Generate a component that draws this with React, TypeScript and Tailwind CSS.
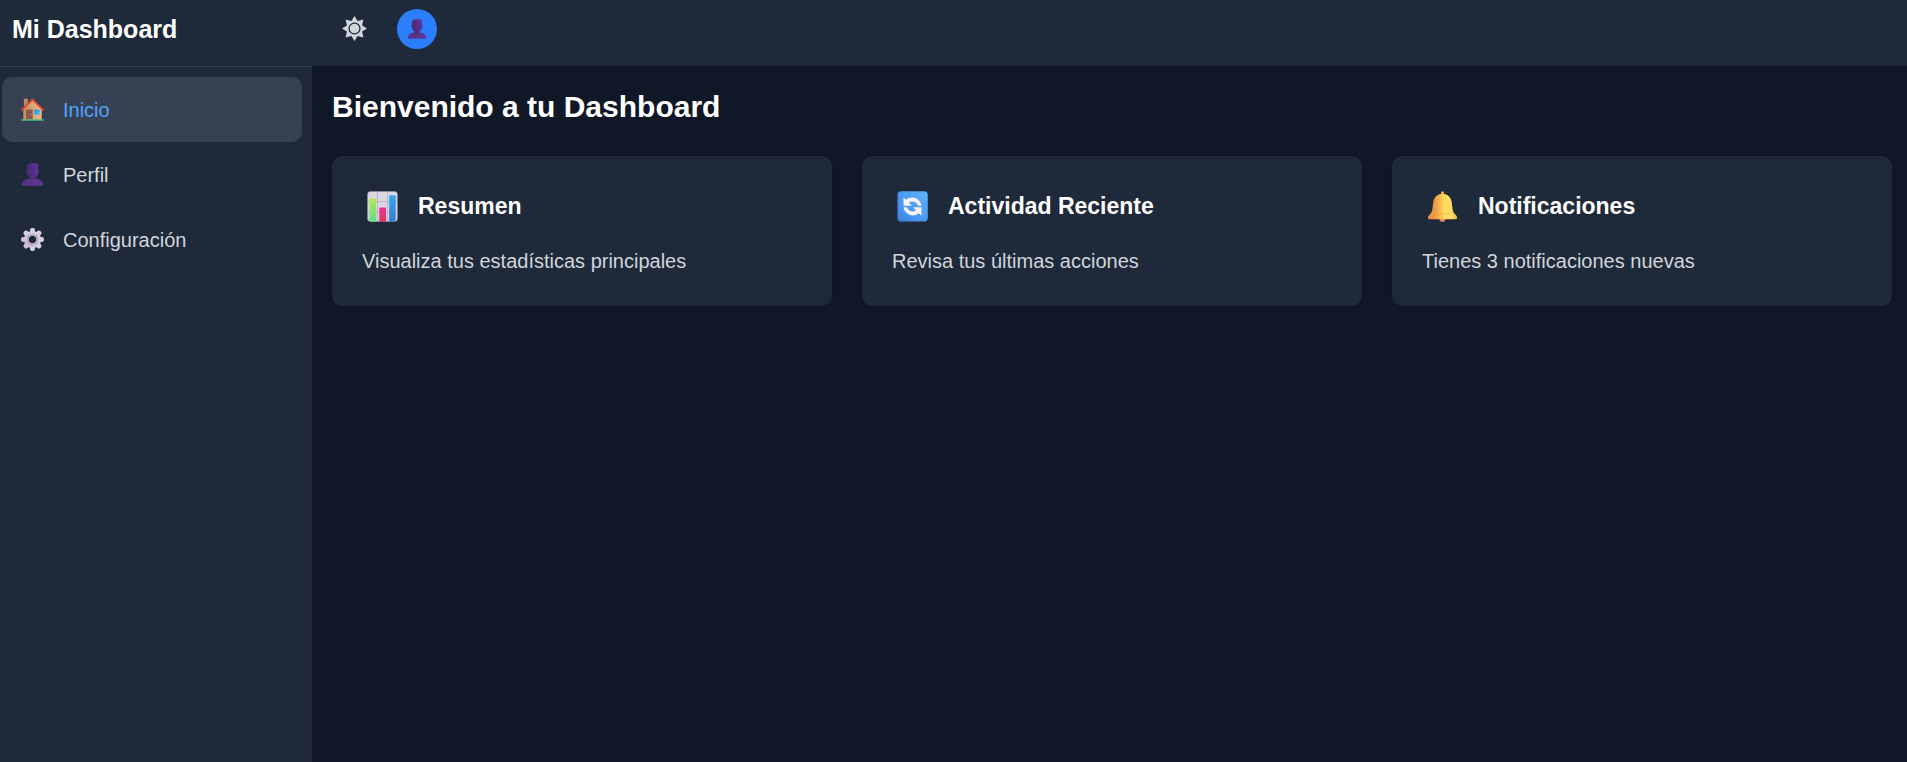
import type { ReactNode } from "react";

function HouseIcon({ className }: { className: string }) {
  return (
    <svg viewBox="0 0 22 22" className={className} aria-hidden="true">
      <defs>
        <linearGradient id="house-wall" x1="0" y1="0" x2="1" y2="0">
          <stop offset="0" stopColor="#c98f62" />
          <stop offset="1" stopColor="#eebb84" />
        </linearGradient>
        <linearGradient id="house-glass" x1="0" y1="0" x2="1" y2="1">
          <stop offset="0" stopColor="#1f8fea" />
          <stop offset="1" stopColor="#33c3f5" />
        </linearGradient>
      </defs>
      <rect x="2.8" y="0.8" width="3.8" height="9" rx="0.4" fill="#c08b63" />
      <path d="M2.2 11 11 2l8.800 9V21H2.200z" fill="url(#house-wall)" />
      <path d="M0.900 11.300 11 1.200l10.100 10.100" fill="none" stroke="#e0492f" strokeWidth="1.700" strokeLinecap="round" strokeLinejoin="round" />
      <rect x="4.800" y="11" width="6.400" height="9.600" rx="0.400" fill="#8a5a50" />
      <circle cx="9.800" cy="16" r="0.500" fill="#d9a37a" />
      <rect x="12.800" y="11" width="5" height="5" rx="0.300" fill="url(#house-glass)" />
      <rect x="0" y="20.300" width="22" height="1.500" rx="0.700" fill="#4fc07c" />
    </svg>
  );
}

function PersonIcon({ className }: { className: string }) {
  return (
    <svg viewBox="0 0 22 22" className={className} aria-hidden="true">
      <defs>
        <linearGradient id="person-head" x1="0" y1="0" x2="1" y2="0">
          <stop offset="0" stopColor="#452a6e" />
          <stop offset="0.6" stopColor="#533087" />
          <stop offset="1" stopColor="#64379a" />
        </linearGradient>
        <linearGradient id="person-body" x1="0" y1="0" x2="1" y2="1">
          <stop offset="0" stopColor="#4f2f7c" />
          <stop offset="1" stopColor="#613a92" />
        </linearGradient>
      </defs>
      <path d="M8.500 11h5v5h-5z" fill="#42266b" />
      <path d="M0.600 21.800C0.700 18.500 3.500 14.900 8 14.900h6c4.500 0 7.300 3.600 7.400 6.900z" fill="url(#person-body)" />
      <rect x="4.700" y="6" width="12.600" height="3.600" rx="1.700" fill="#50307f" />
      <path d="M5.600 3.500C5.600 1.200 7.300 0.300 9.300 0.300h5.200C15.900 0.300 16.500 1.200 16.500 2.500V9c0 3.200-2.400 5.600-5.400 5.600S5.600 12.200 5.600 9z" fill="url(#person-head)" />
      <path d="M10.500 1.400C12 1.200 13.500 1.200 15.200 1.500" fill="none" stroke="#7044a0" strokeWidth="0.700" />
    </svg>
  );
}

function GearIcon({ className }: { className: string }) {
  const teeth = [0, 45, 90, 135, 180, 225, 270, 315];
  return (
    <svg viewBox="-11 -11 22 22" className={className} aria-hidden="true">
      <defs>
        <linearGradient id="gear-metal" gradientUnits="userSpaceOnUse" x1="8" y1="-8" x2="-8" y2="8">
          <stop offset="0" stopColor="#dfd9e4" />
          <stop offset="1" stopColor="#c9b3da" />
        </linearGradient>
      </defs>
      <g fill="url(#gear-metal)">
        <path
          fillRule="evenodd"
          d="M8.200 0A8.200 8.200 0 1 0-8.200 0 8.200 8.200 0 1 0 8.200 0zM3.500 0A3.500 3.500 0 1 1-3.500 0 3.500 3.500 0 1 1 3.500 0z"
        />
      </g>
      {teeth.map((angle) => (
        <path
          key={angle}
          d="M-2.700-7-2.200-9.600C-2-10.600-1.300-11 0-11S2-10.600 2.200-9.600L2.700-7z"
          fill={angle > 180 && angle < 300 ? "#cfc0d9" : "#d8cfdf"}
          transform={`rotate(${angle})`}
        />
      ))}
      <circle r="4.600" fill="none" stroke="#b5a8bd" strokeWidth="2" />
    </svg>
  );
}

function SunIcon({ className }: { className: string }) {
  return (
    <svg viewBox="-12.5 -12.5 25 25" className={className} fill="currentColor" aria-hidden="true">
      <path
        fillRule="evenodd"
        d="M12.500 0 7.600 3.100 8.900 8.900 3.100 7.600 0 12.500-3.100 7.600-8.900 8.900-7.600 3.100-12.500 0-7.600-3.100-8.900-8.900-3.100-7.600 0-12.500 3.100-7.600 8.900-8.900 7.600-3.100zM6.100 0A6.100 6.100 0 1 0-6.100 0 6.100 6.100 0 1 0 6.100 0z"
      />
      <circle r="4.800" />
    </svg>
  );
}

function ChartIcon({ className }: { className: string }) {
  return (
    <svg viewBox="0 0 30 30" className={className} aria-hidden="true">
      <defs>
        <linearGradient id="chart-green" x1="0" y1="0" x2="0" y2="1">
          <stop offset="0" stopColor="#b5e550" />
          <stop offset="1" stopColor="#5fe08d" />
        </linearGradient>
        <linearGradient id="chart-pink" x1="0" y1="0" x2="0" y2="1">
          <stop offset="0" stopColor="#ee2f95" />
          <stop offset="1" stopColor="#d63a5c" />
        </linearGradient>
        <linearGradient id="chart-blue" x1="0" y1="0" x2="0" y2="1">
          <stop offset="0" stopColor="#36a8f5" />
          <stop offset="1" stopColor="#3a78cf" />
        </linearGradient>
      </defs>
      <rect x="0.300" y="0.300" width="29.400" height="29.400" rx="3.300" fill="#b7abc0" />
      <rect x="1" y="0.900" width="28" height="28" rx="2.800" fill="#dcd5e2" />
      <path d="M10 1v28M20 1v28M1 10.300h28M1 20.300h28" stroke="#b9afc2" strokeWidth="0.900" />
      <path d="M2.300 8.300a1 1 0 0 1 1-1h4.400a1 1 0 0 1 1 1v21.400H4.500a2.200 2.200 0 0 1-2.200-2.200z" fill="url(#chart-green)" />
      <path d="M11.900 17a1 1 0 0 1 1-1h4.500a1 1 0 0 1 1 1v12.700h-6.500z" fill="url(#chart-pink)" />
      <path d="M21.500 5.200a1 1 0 0 1 1-1h4.300a1 1 0 0 1 1 1v22a2.500 2.500 0 0 1-2.500 2.500h-3.800z" fill="url(#chart-blue)" />
    </svg>
  );
}

function RefreshIcon({ className }: { className: string }) {
  return (
    <svg viewBox="0 0 30 30" className={className} aria-hidden="true">
      <defs>
        <linearGradient id="refresh-tile" x1="1" y1="0" x2="0" y2="1">
          <stop offset="0" stopColor="#5cb4fb" />
          <stop offset="0.500" stopColor="#4d9df4" />
          <stop offset="1" stopColor="#3f86e4" />
        </linearGradient>
      </defs>
      <rect x="0.300" y="0.300" width="29.400" height="29.400" rx="3.300" fill="#4272c4" />
      <rect x="1.200" y="0.500" width="28.400" height="28.200" rx="3" fill="url(#refresh-tile)" />
      <g fill="#f6f1fb">
        <path d="M6.300 6v8.200h8.200l-2.900-2.900c2.600-2 7-1.500 8.900 2.900h3.200C22.800 7.500 14.500 3.700 8.800 8.500z" />
        <path d="M23.700 24v-8.200h-8.200l2.900 2.900c-2.600 2-7 1.500-8.900-2.900H6.300c0.900 6.700 9.200 10.500 14.900 5.700z" />
      </g>
    </svg>
  );
}

function BellIcon({ className }: { className: string }) {
  return (
    <svg viewBox="0 0 30 30" className={className} aria-hidden="true">
      <defs>
        <linearGradient id="bell-gold" x1="0" y1="0" x2="1" y2="0">
          <stop offset="0" stopColor="#e58c42" />
          <stop offset="0.300" stopColor="#f0a04c" />
          <stop offset="0.550" stopColor="#ffd957" />
          <stop offset="0.800" stopColor="#ffe066" />
          <stop offset="1" stopColor="#f6bd48" />
        </linearGradient>
      </defs>
      <circle cx="15" cy="26.800" r="3" fill="#ee8163" />
      <circle cx="15" cy="1.900" r="1.600" fill="#f0ab3d" />
      <path d="M15 2.600c5.200 0 8.300 3.700 8.900 8.200l1 7.500c0.300 2.200 1.800 3.700 3 4.900 0.800 0.800 1.200 1.700 1.200 2.800 0 0.900-0.500 1.400-1.300 1.400H2.200C1.400 27.400 0.900 26.900 0.900 26c0-1.100 0.400-2 1.200-2.800 1.200-1.200 2.700-2.700 3-4.900l1-7.500C6.700 6.300 9.800 2.600 15 2.600z" fill="url(#bell-gold)" />
      <path d="M5 20.500c6 2 14 2 20 0" fill="none" stroke="#f0a83f" strokeOpacity="0.500" strokeWidth="0.900" />
    </svg>
  );
}

type NavItem = { label: string; icon: ReactNode; active?: boolean };

const navItems: NavItem[] = [
  { label: "Inicio", icon: <HouseIcon className="size-[23px]" />, active: true },
  { label: "Perfil", icon: <PersonIcon className="size-[23px]" /> },
  { label: "Configuración", icon: <GearIcon className="size-[23px]" /> },
];

const cards = [
  { title: "Resumen", text: "Visualiza tus estadísticas principales", icon: <ChartIcon className="size-[31px]" /> },
  { title: "Actividad Reciente", text: "Revisa tus últimas acciones", icon: <RefreshIcon className="size-[31px]" /> },
  { title: "Notificaciones", text: "Tienes 3 notificaciones nuevas", icon: <BellIcon className="size-[31px]" /> },
];

function Sidebar() {
  return (
    <aside className="w-[312px] shrink-0 bg-gray-800">
      <div className="flex h-[67px] items-start border-b border-gray-700 px-3 pt-3">
        <h1 className="text-[25px] leading-[35px] font-bold text-white">Mi Dashboard</h1>
      </div>
      <nav className="mt-[10px] mr-[10px] ml-[2px]">
        <ul>
          {navItems.map((item) => (
            <li key={item.label}>
              <a
                href="#"
                aria-current={item.active ? "page" : undefined}
                className={
                  item.active
                    ? "flex h-[65px] items-center gap-[19px] rounded-[10px] bg-gray-700 px-[19px] text-[20px] text-blue-400"
                    : "flex h-[65px] items-center gap-[19px] rounded-[10px] px-[19px] text-[20px] text-gray-300"
                }
              >
                {item.icon}
                <span>{item.label}</span>
              </a>
            </li>
          ))}
        </ul>
      </nav>
    </aside>
  );
}

export default function App() {
  return (
    <div className="flex min-h-screen bg-gray-900 font-['Liberation_Sans',Arial,sans-serif]">
      <Sidebar />
      <div className="min-w-0 flex-1">
        <header className="flex h-[66px] items-start gap-[30px] bg-gray-800 px-[30px] pt-[9px]">
          <button type="button" aria-label="Cambiar tema" className="flex h-[39px] items-center text-gray-300">
            <SunIcon className="size-[25px]" />
          </button>
          <button type="button" aria-label="Perfil de usuario" className="flex size-10 items-center justify-center rounded-full bg-blue-500">
            <PersonIcon className="size-5" />
          </button>
        </header>
        <main className="pt-5 pr-[15px] pl-5">
          <h2 className="text-[30px] leading-[42px] font-bold text-white">Bienvenido a tu Dashboard</h2>
          <div className="mt-7 grid grid-cols-3 gap-[30px]">
            {cards.map((card) => (
              <section key={card.title} className="rounded-[10px] bg-gray-800 p-[30px] shadow-sm">
                <div className="mb-5 flex h-10 items-center gap-5 pl-[5px]">
                  {card.icon}
                  <h3 className="text-[23px] leading-[35px] font-bold text-white">{card.title}</h3>
                </div>
                <p className="text-[20px] leading-[30px] text-gray-300">{card.text}</p>
              </section>
            ))}
          </div>
        </main>
      </div>
    </div>
  );
}
